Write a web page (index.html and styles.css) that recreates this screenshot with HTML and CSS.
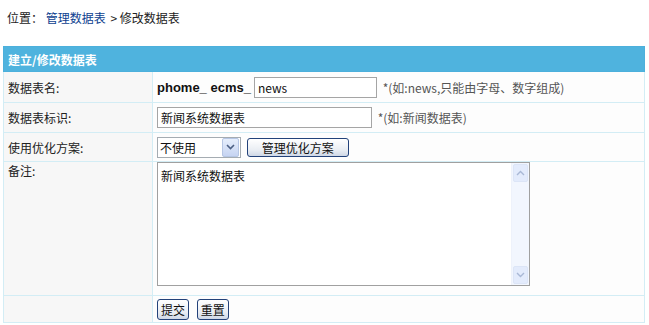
FILE: index.html
```html
<!DOCTYPE html>
<html>
<head>
  <title>修改数据表</title>
  <link rel="stylesheet" href="styles.css">
</head>
<body>
  <div class="crumbs">
    位置： <a href="#">管理数据表</a> &gt; 修改数据表
  </div>

  <form class="form-box">
    <table class="tableborder">
      <tr class="header">
        <td colspan="2">建立/修改数据表</td>
      </tr>
      <tr class="row-name">
        <td class="label">数据表名:</td>
        <td class="field">
          <strong class="prefix">phome_ ecms_</strong><input type="text" class="text short" value="news">
          <span class="hint">*(如:news,只能由字母、数字组成)</span>
        </td>
      </tr>
      <tr class="row-title">
        <td class="label">数据表标识:</td>
        <td class="field">
          <input type="text" class="text wide" value="新闻系统数据表">
          <span class="hint">*(如:新闻数据表)</span>
        </td>
      </tr>
      <tr class="row-plan">
        <td class="label">使用优化方案:</td>
        <td class="field">
          <span class="select-box">
            <select class="select">
              <option>不使用</option>
            </select>
            <span class="select-arrow">
              <svg viewBox="0 0 9 6" width="9" height="6"><polyline points="1 1 4.5 4.5 8 1" fill="none" stroke="#4d6185" stroke-width="1.6"></polyline></svg>
            </span>
          </span>
          <button type="button" class="btn">管理优化方案</button>
        </td>
      </tr>
      <tr class="row-note">
        <td class="label top">备注:</td>
        <td class="field top">
          <div class="memo">
            <textarea class="memo-text">新闻系统数据表</textarea>
            <div class="scrollbar">
              <span class="sb-btn">
                <svg viewBox="0 0 9 6" width="9" height="6"><polyline points="1 5 4.5 1.5 8 5" fill="none" stroke="#a9b8d6" stroke-width="1.4"></polyline></svg>
              </span>
              <span class="sb-btn">
                <svg viewBox="0 0 9 6" width="9" height="6"><polyline points="1 1 4.5 4.5 8 1" fill="none" stroke="#a9b8d6" stroke-width="1.4"></polyline></svg>
              </span>
            </div>
          </div>
        </td>
      </tr>
      <tr class="row-submit">
        <td class="label"></td>
        <td class="field">
          <button type="submit" class="btn small">提交</button>
          <button type="reset" class="btn small">重置</button>
        </td>
      </tr>
    </table>
  </form>
</body>
</html>
```

FILE: styles.css
```css
body {
  margin: 0;
  padding: 0 5px 0 3px;
  font-family: "Noto Sans CJK SC", "DejaVu Sans", sans-serif;
  font-size: 12px;
  color: #222222;
  background: #ffffff;
}

.crumbs {
  padding: 10px 4px 0;
  height: 27px;
  line-height: 16px;
  color: #222222;
}

.crumbs a {
  color: #0d3f8f;
  text-decoration: none;
  margin-right: 2px;
}

.form-box {
  margin: 9px 0 0;
}

.tableborder {
  width: 642px;
  border-collapse: collapse;
  border: 1px solid #4cb0dc;
  border-bottom-color: #bfeaf7;
}

.tableborder td {
  border: 1px solid #d3edf5;
  padding: 0 4px;
}

.header td {
  height: 24px;
  background: #4fb3de;
  color: #ffffff;
  font-weight: bold;
  border-color: #4cb0dc;
}

.label {
  width: 140px;
  background: #f7f7f7;
  color: #222222;
}

.field {
  background: #fdfdfd;
  white-space: nowrap;
}

.top {
  vertical-align: top;
  padding-top: 4px;
}

.row-name td { height: 30px; }
.row-title td { height: 29px; }
.row-plan td { height: 28px; }
.row-note td { height: 133px; }
.row-submit td { height: 26px; }

.prefix {
  font-family: "Liberation Sans", Arial, sans-serif;
  font-size: 13px;
  color: #111111;
  vertical-align: middle;
  margin-right: 3px;
}

.text {
  box-sizing: border-box;
  height: 21px;
  border: 1px solid #a5a5a5;
  padding: 0 3px;
  font-family: "Noto Sans CJK SC", "DejaVu Sans", sans-serif;
  font-size: 12px;
  color: #111111;
  background: #ffffff;
  vertical-align: middle;
  outline: none;
}

.short { width: 123px; }
.wide { width: 215px; }

.hint {
  color: #555555;
  margin-left: 3px;
  vertical-align: middle;
}

.select-box {
  display: inline-flex;
  align-items: center;
  box-sizing: border-box;
  width: 84px;
  height: 21px;
  border: 1px solid #a5acb2;
  background: #ffffff;
  vertical-align: middle;
}

.select {
  flex: 1;
  min-width: 0;
  height: 19px;
  border: none;
  padding: 0 2px;
  appearance: none;
  -webkit-appearance: none;
  background: transparent;
  font-family: "Noto Sans CJK SC", sans-serif;
  font-size: 12px;
  color: #111111;
  outline: none;
}

.select-arrow {
  display: flex;
  align-items: center;
  justify-content: center;
  width: 15px;
  height: 17px;
  margin-right: 1px;
  border: 1px solid #b6c6e4;
  border-radius: 2px;
  background: linear-gradient(#e6eefc, #c6d4f2);
}

.btn {
  box-sizing: border-box;
  height: 19px;
  padding: 0 14px;
  margin-left: 3px;
  border: 1px solid #23427a;
  border-radius: 3px;
  background: linear-gradient(#ffffff, #e9edf3 65%, #cfd8e6);
  font-family: "Noto Sans CJK SC", sans-serif;
  font-size: 12px;
  line-height: 15px;
  color: #111111;
  vertical-align: middle;
  cursor: pointer;
}

.btn.small {
  height: 21px;
  padding: 0 3px;
  margin-left: 0;
  margin-right: 5px;
}

.memo {
  display: flex;
  box-sizing: border-box;
  width: 373px;
  height: 124px;
  border: 1px solid #a0a0a0;
  background: #ffffff;
}

.memo-text {
  flex: 1;
  border: none;
  resize: none;
  padding: 4px 3px;
  font-family: "Noto Sans CJK SC", sans-serif;
  font-size: 12px;
  color: #111111;
  outline: none;
  overflow: hidden;
}

.scrollbar {
  display: flex;
  flex-direction: column;
  justify-content: space-between;
  width: 17px;
  background: #f2f6fe;
  border-left: 1px solid #eef2fb;
}

.sb-btn {
  display: flex;
  align-items: center;
  justify-content: center;
  height: 16px;
  margin: 1px;
  border: 1px solid #dce5f7;
  border-radius: 2px;
  background: #e3ebfc;
}
```
